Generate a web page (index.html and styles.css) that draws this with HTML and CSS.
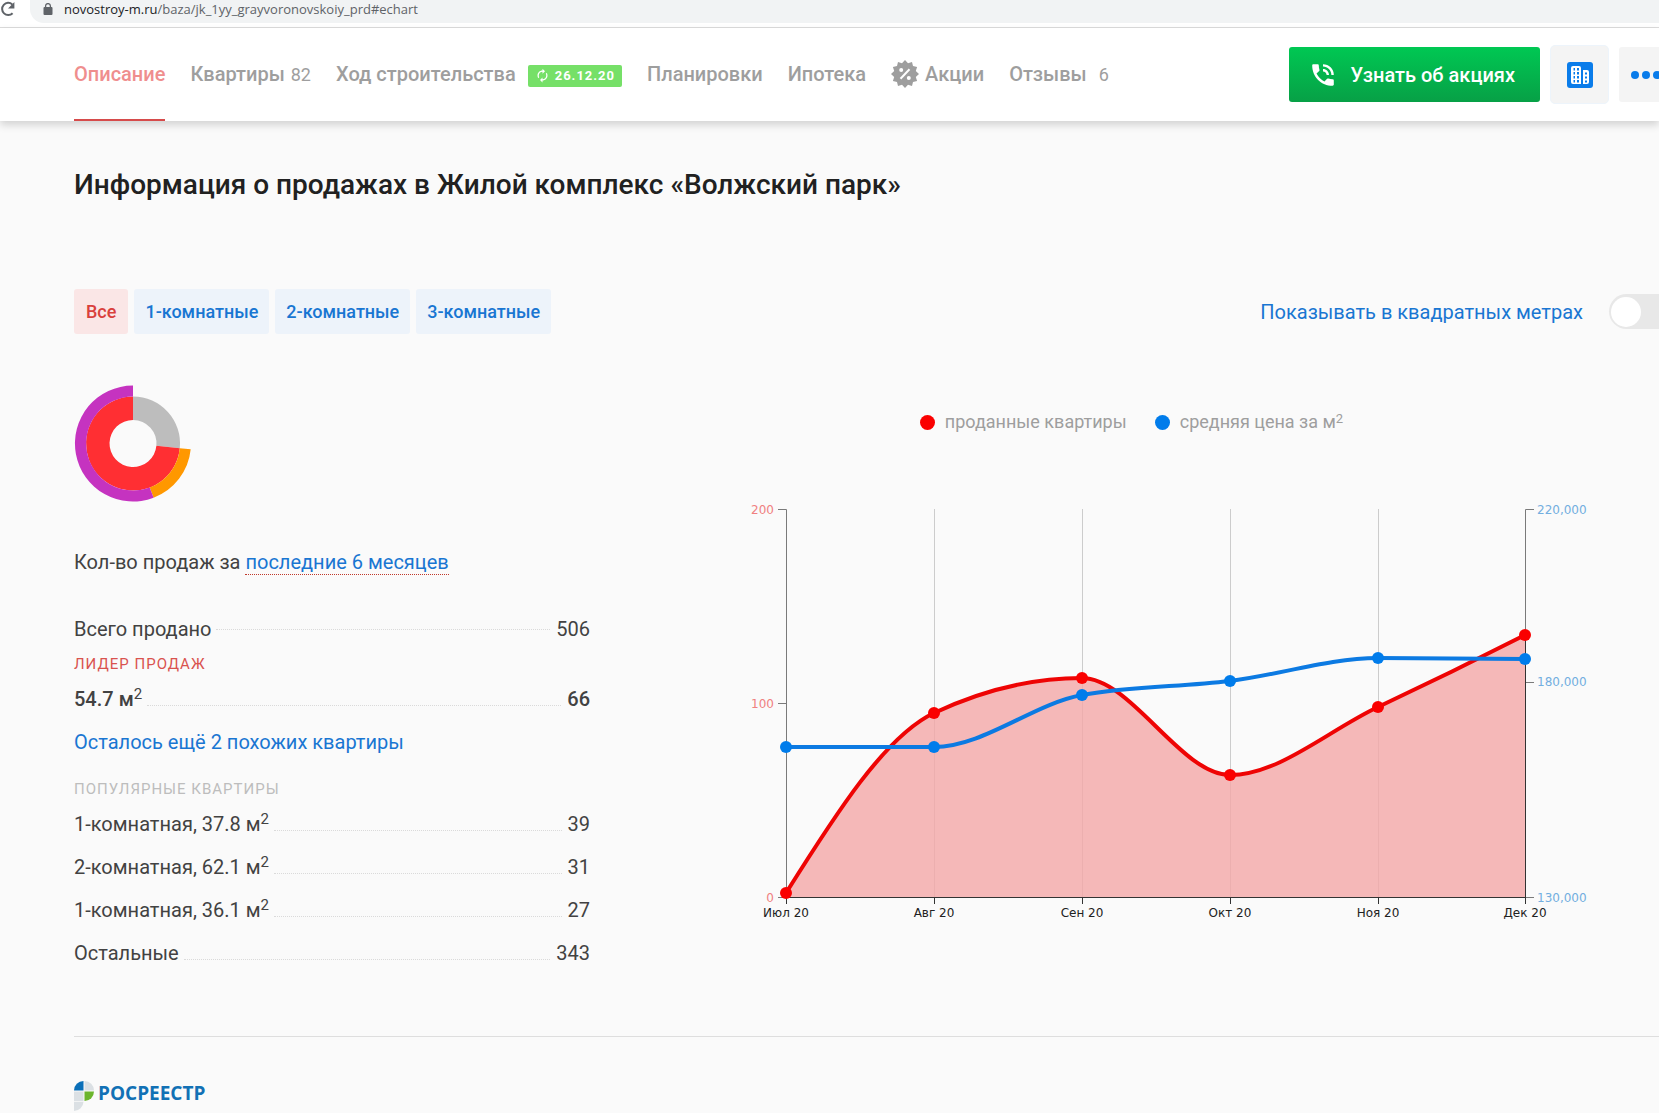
FILE: index.html
```html
<!DOCTYPE html>
<html lang="ru">
<head>
<meta charset="utf-8">
<title>Жилой комплекс «Волжский парк»</title>
<link rel="stylesheet" href="styles.css">
</head>
<body>
<div class="browser-bar">
  <svg class="reload" viewBox="0 0 16 16" width="16" height="16" aria-hidden="true"><path d="M12.6 12.2A6.1 6.1 0 1 1 12.3 3.4" fill="none" stroke="#5f6368" stroke-width="2"/><path d="M14.4 1v6.4H8z" fill="#5f6368"/></svg>
  <div class="address">
    <svg viewBox="0 0 10 12" width="10" height="12" aria-hidden="true"><rect x="0.5" y="4" width="9" height="8" rx="1" fill="#5f6368"/><path d="M2.6 5V3a2.4 2.4 0 0 1 4.8 0v2" fill="none" stroke="#5f6368" stroke-width="1.3"/></svg>
    <span><span class="host">novostroy-m.ru</span>/baza/jk_1yy_grayvoronovskoiy_prd#echart</span>
  </div>
</div>

<header class="header">
  <nav class="nav">
    <a class="nav-link active" href="#about">Описание</a>
    <a class="nav-link" href="#flats">Квартиры <span class="count">82</span></a>
    <a class="nav-link" href="#progress">Ход строительства
      <span class="badge"><svg viewBox="0 0 24 24" width="15" height="15" aria-hidden="true"><path fill="currentColor" d="M12 6v3l4-4-4-4v3c-4.42 0-8 3.58-8 8 0 1.57.46 3.03 1.24 4.26L6.7 14.8A5.87 5.87 0 0 1 6 12c0-3.31 2.69-6 6-6zm6.76 1.74L17.3 9.2c.44.84.7 1.79.7 2.8 0 3.31-2.69 6-6 6v-3l-4 4 4 4v-3c4.42 0 8-3.58 8-8 0-1.57-.46-3.03-1.24-4.26z"/></svg>26.12.20</span></a>
    <a class="nav-link" href="#plans">Планировки</a>
    <a class="nav-link" href="#mortgage">Ипотека</a>
    <a class="nav-link" href="#promo"><svg viewBox="0 0 28 28" width="28" height="28" aria-hidden="true"><path fill="currentColor" d="M14 0l3 3.2L21 1.900l1 4.100 4.100 1-1.300 4L28 14l-3.200 3 1.300 4-4.100 1-1 4.100-4-1.300L14 28l-3-3.200-4 1.300L6 22l-4.100-1 1.300-4L0 14l3.200-3L1.900 7 6 6l1-4.100 4 1.300z"/><path d="M9.500 18.800L18.500 9.200" stroke="#fff" stroke-width="2"/><circle cx="10.200" cy="10" r="2" fill="#fff"/><circle cx="17.800" cy="18" r="2" fill="#fff"/></svg>Акции</a>
    <a class="nav-link" href="#reviews">Отзывы <span class="count count-wide">6</span></a>
  </nav>
  <div class="actions">
    <button class="call" type="button"><svg viewBox="2 2 20 20" width="24" height="24" aria-hidden="true"><path fill="currentColor" d="M20 15.500c-1.250 0-2.450-.2-3.570-.57a1.020 1.020 0 0 0-1.020.24l-2.200 2.200a15.045 15.045 0 0 1-6.590-6.590l2.200-2.210c.28-.26.36-.65.25-1C8.700 6.450 8.500 5.250 8.500 4c0-.55-.45-1-1-1H4c-.55 0-1 .45-1 1 0 9.390 7.610 17 17 17 .55 0 1-.45 1-1v-3.500c0-.55-.45-1-1-1zM19 12h2a9 9 0 0 0-9-9v2c3.870 0 7 3.130 7 7zm-4 0h2c0-2.760-2.240-5-5-5v2c1.660 0 3 1.340 3 3z"/></svg>Узнать об акциях</button>
    <button class="compare" type="button" aria-label="Новостройки"><svg viewBox="0 0 26 26" width="26" height="26" aria-hidden="true"><rect width="26" height="26" rx="3" fill="#0a7cea"/><path fill="#fff" fill-rule="evenodd" d="M6 4h6q2 0 2 2v16H6q-2 0-2-2V6q0-2 2-2zm.5 2v2.500H8V6zm3.500 0v2.500h2V6zM6.500 10v2.500H8V10zm3.500 0v2.500h2V10zm-3.500 4v2.500H8V14zm3.500 0v2.500h2V14zm-3.500 4v2.500H8V18zm3.500 0v2.500h2V18z"/><path fill="#fff" fill-rule="evenodd" d="M16 8h4q2 0 2 2v10q0 2-2 2h-4zm2 2.500v2h2v-2zm0 4v2h2v-2zm0 4v2h2v-2z"/></svg></button>
    <button class="more" type="button" aria-label="Ещё"><svg viewBox="0 0 30 8" width="30" height="8" aria-hidden="true"><g fill="#0a7cea"><circle cx="4" cy="4" r="4"/><circle cx="15" cy="4" r="4"/><circle cx="26" cy="4" r="4"/></g></svg></button>
  </div>
</header>

<main class="main">
  <h1>Информация о продажах в Жилой комплекс «Волжский парк»</h1>

  <div class="toolbar">
    <div class="tabs">
      <button class="tab selected" type="button">Все</button>
      <button class="tab" type="button">1-комнатные</button>
      <button class="tab" type="button">2-комнатные</button>
      <button class="tab" type="button">3-комнатные</button>
    </div>
    <div class="switch">
      <label for="meters">Показывать в квадратных метрах</label>
      <input id="meters" type="checkbox">
    </div>
  </div>

  <div class="content">
    <section class="stats">
      <svg class="donut" viewBox="0 0 118 118" width="118" height="118" role="img" aria-label="Доли продаж">
        <path d="M59 12.500A47 47 0 0 1 105.800 64.200L82.400 61.800A23.500 23.500 0 0 0 59 36z" fill="#bdbdbd"/>
        <path d="M105.800 64.200A47 47 0 1 1 59 12.500V36A23.500 23.500 0 1 0 82.400 61.800z" fill="#ff2f33"/>
        <path d="M116.700 65.300A58 58 0 0 1 79.600 113.700L75.700 103.500A47 47 0 0 0 105.800 64.200z" fill="#ff9800"/>
        <path d="M79.600 113.700A58 58 0 1 1 59 1.500V12.500A47 47 0 1 0 75.700 103.500z" fill="#c533c0"/>
      </svg>
      <p class="period">Кол-во продаж за <a href="#period">последние 6 месяцев</a></p>
      <dl class="rows">
        <div class="row row-total"><dt><span>Всего продано</span></dt><dd>506</dd></div>
      </dl>
      <h2 class="caption leader">Лидер продаж</h2>
      <dl class="rows">
        <div class="row row-bold"><dt><span>54.7 м<sup>2</sup></span></dt><dd>66</dd></div>
      </dl>
      <a class="similar" href="#similar">Осталось ещё 2 похожих квартиры</a>
      <h2 class="caption popular">Популярные квартиры</h2>
      <dl class="rows">
        <div class="row"><dt><span>1-комнатная, 37.8 м<sup>2</sup></span></dt><dd>39</dd></div>
        <div class="row"><dt><span>2-комнатная, 62.1 м<sup>2</sup></span></dt><dd>31</dd></div>
        <div class="row"><dt><span>1-комнатная, 36.1 м<sup>2</sup></span></dt><dd>27</dd></div>
        <div class="row"><dt><span>Остальные</span></dt><dd>343</dd></div>
      </dl>
    </section>

    <section class="chart">
      <ul class="legend">
        <li class="sold">проданные квартиры</li>
        <li class="price"><span>средняя цена за м<sup>2</sup></span></li>
      </ul>
      <svg class="plot" viewBox="0 0 860 430" role="img" aria-label="Продажи и цены по месяцам">
        <path class="grid" d="M194.500 9V397M342.500 9V397M490.500 9V397M638.500 9V397"/>
        <path class="axis" d="M38 9.500H46.500V397M38 203.500H46M38 397.500H46M794 9.500H785.500V397M786 182.500H794M786 397.500H794"/>
        <path class="area" d="M46 393C95 315 145 236 194 213C243 190 293 178 342 178C391 178 441 275 490 275C539 275 589 230 638 207C687 184 736 160 785 135V397H46z"/>
        <path class="axis-x" d="M46 397.500H786M46.500 397V404M194.500 397V404M342.500 397V404M490.500 397V404M638.500 397V404M785.500 135V404"/>
        <path class="line line-red" d="M46 393C95 315 145 236 194 213C243 190 293 178 342 178C391 178 441 275 490 275C539 275 589 230 638 207C687 184 736 160 785 135"/>
        <g class="dots-red"><circle cx="46" cy="393" r="6"/><circle cx="194" cy="213" r="6"/><circle cx="342" cy="178" r="6"/><circle cx="490" cy="275" r="6"/><circle cx="638" cy="207" r="6"/><circle cx="785" cy="135" r="6"/></g>
        <path class="line line-blue" d="M46 247C95 247 145 247 194 247C243 247 293 204 342 195C391 186 441 187 490 181C539 175 589 158 638 158C687 158 736 159 785 159"/>
        <g class="dots-blue"><circle cx="46" cy="247" r="6"/><circle cx="194" cy="247" r="6"/><circle cx="342" cy="195" r="6"/><circle cx="490" cy="181" r="6"/><circle cx="638" cy="158" r="6"/><circle cx="785" cy="159" r="6"/></g>
        <g class="tick tick-left"><text x="34" y="14">200</text><text x="34" y="208">100</text><text x="34" y="402">0</text></g>
        <g class="tick tick-right"><text x="797" y="14">220,000</text><text x="797" y="186">180,000</text><text x="797" y="402">130,000</text></g>
        <g class="tick tick-month"><text x="46" y="417">Июл 20</text><text x="194" y="417">Авг 20</text><text x="342" y="417">Сен 20</text><text x="490" y="417">Окт 20</text><text x="638" y="417">Ноя 20</text><text x="785" y="417">Дек 20</text></g>
      </svg>
    </section>
  </div>

  <footer class="source">
    <svg viewBox="0 0 20 30" width="20" height="30" aria-hidden="true"><path d="M0 9.500A9.500 9.500 0 0 1 9.500 0V9.500z" fill="#0a6fb8"/><path d="M10.500 0A9.500 9.500 0 0 1 20 9.500H10.500zM0 10.500H9.500V20H0zM0 20.800H9.500A9.500 9.500 0 0 1 0 30z" fill="#dbe0e4"/><path d="M10.500 10.500H20A9.500 9.500 0 0 1 10.500 20z" fill="#6cb52d"/></svg>
    <span>РОСРЕЕСТР</span>
  </footer>
</main>
</body>
</html>
```
FILE: styles.css
```css
* {
  box-sizing: border-box;
}

body {
  margin: 0;
  overflow-x: hidden;
  background: #fafafa;
  color: #424242;
  font-family: Roboto, "Liberation Sans", sans-serif;
  font-size: 20px;
  line-height: 28px;
}

a {
  color: #1976d2;
  text-decoration: none;
}

button {
  border: 0;
  font-family: inherit;
  cursor: pointer;
}

sup {
  font-size: 15px;
  line-height: 0;
  vertical-align: 7px;
}

/* Address bar */
.browser-bar {
  display: flex;
  gap: 14px;
  height: 28px;
  padding-bottom: 4px;
  border-bottom: 1px solid #dcdcdc;
  background: #fff;
}

.reload {
  margin-top: 1px;
}

.address {
  flex: 1;
  display: flex;
  align-items: center;
  gap: 11px;
  padding: 0 13px 5px;
  border-radius: 0 0 0 14px;
  background: #f1f3f4;
  color: #5f6368;
  font-family: "Open Sans", "Noto Sans", sans-serif;
  font-size: 13px;
  line-height: 18px;
}

.host {
  color: #202124;
}

/* Sticky header */
.header {
  display: flex;
  justify-content: space-between;
  height: 93px;
  padding-left: 74px;
  background: #fff;
  box-shadow: 0 4px 8px rgba(0, 0, 0, 0.16);
}

.nav {
  display: flex;
  gap: 25px;
}

.nav-link {
  display: flex;
  align-items: center;
  gap: 6px;
  border-bottom: 2px solid transparent;
  color: #9e9e9e;
  font-weight: 500;
  white-space: nowrap;
}

.nav-link.active {
  border-color: #d64b4b;
  color: #ef8e8e;
}

.count {
  padding-top: 2px;
  font-size: 18px;
  font-weight: 400;
}

.count-wide {
  padding-left: 6px;
}

.badge {
  display: flex;
  align-items: center;
  gap: 5px;
  height: 22px;
  margin: 4px 0 0 6px;
  padding: 0 7px;
  border-radius: 2px;
  background: #76e068;
  color: #fff;
  font-size: 13px;
  font-weight: 700;
  letter-spacing: 1px;
}

.actions {
  display: flex;
  align-items: center;
  gap: 10px;
}

.call {
  display: flex;
  align-items: center;
  gap: 16px;
  height: 55px;
  padding: 0 25px 0 22px;
  border-radius: 3px;
  background: linear-gradient(#00c853, #07a046);
  color: #fff;
  font-size: 20px;
  font-weight: 500;
  white-space: nowrap;
}

.compare {
  display: flex;
  align-items: center;
  justify-content: center;
  width: 59px;
  height: 59px;
  padding: 0;
  border: 1px solid #edf4fb;
  border-radius: 5px;
  background: #f4f4f4;
}

.more {
  display: flex;
  align-items: center;
  overflow: hidden;
  width: 40px;
  height: 55px;
  padding: 0 0 0 12px;
  border-radius: 3px 0 0 3px;
  background: #f4f4f4;
}

.more svg {
  flex: none;
}

/* Sales section */
.main {
  padding: 46px 0 0 74px;
}

h1 {
  margin: 0 0 86px;
  color: #212121;
  font-size: 28px;
  font-weight: 500;
  line-height: 36px;
}

.toolbar {
  display: flex;
  align-items: center;
  justify-content: space-between;
}

.tabs {
  display: flex;
  gap: 6px;
}

.tab {
  height: 45px;
  padding: 0 11px;
  border-radius: 3px;
  background: #edf3fa;
  color: #1976d2;
  font-size: 18px;
  font-weight: 500;
}

.tab.selected {
  padding: 0 12px;
  background: #fae6e6;
  color: #d9403c;
}

.switch {
  display: flex;
  align-items: center;
  gap: 26px;
  color: #1976d2;
}

.switch input {
  appearance: none;
  display: flex;
  align-items: center;
  width: 50px;
  height: 35px;
  margin: 0;
  padding: 0 2px;
  border-radius: 18px 0 0 18px;
  background: #e8e8e8;
}

.switch input::before {
  content: "";
  width: 30px;
  height: 30px;
  border-radius: 50%;
  background: #fff;
}

.switch input:checked {
  justify-content: flex-end;
}

.content {
  display: grid;
  grid-template-columns: 516px 1fr;
  gap: 150px;
  padding: 50px 0 69px;
  border-bottom: 1px solid #dedede;
}

.donut {
  display: block;
}

.period {
  margin: 46px 0 39px;
}

.period a {
  border-bottom: 1px dotted #c0392b;
}

.rows {
  display: grid;
  gap: 15px;
  margin: 0;
}

.row {
  display: flex;
  gap: 6px;
}

.row dt {
  flex: 1;
  display: flex;
  align-items: baseline;
  gap: 5px;
}

.row dt::after {
  content: "";
  flex: 1;
  border-bottom: 1px dotted #dadada;
}

.row-total dt::after {
  align-self: center;
}

.row-bold {
  font-weight: 500;
}

.row-bold sup {
  font-weight: 400;
}

.row dd {
  margin: 0;
}

.caption {
  margin: 11px 0;
  font-size: 15px;
  font-weight: 400;
  line-height: 20px;
  letter-spacing: 1px;
  text-transform: uppercase;
}

.leader {
  color: #d9534f;
}

.popular {
  margin-top: 23px;
  color: #bdbdbd;
}

.similar {
  display: block;
  margin-top: 15px;
}

/* Chart */
.chart {
  padding: 26px 59px 0 0;
}

.legend {
  display: flex;
  justify-content: center;
  gap: 28px;
  margin: 0 0 66px;
  padding: 0 77px 0 0;
  color: #9e9e9e;
  font-size: 18px;
  line-height: 24px;
  list-style: none;
}

.legend li {
  display: flex;
  align-items: center;
  gap: 10px;
}

.legend li::before {
  content: "";
  width: 15px;
  height: 15px;
  border-radius: 50%;
}

.legend sup {
  font-size: 13px;
  vertical-align: 5px;
}

.sold::before {
  background: #fa0000;
}

.price::before {
  background: #007ceb;
}

.plot {
  display: block;
  width: 100%;
}

.plot path {
  fill: none;
}

.plot .grid {
  stroke: #cccccc;
}

.plot .axis {
  stroke: #7a7a7a;
}

.plot .axis-x {
  stroke: #333;
}

.plot .area {
  fill: rgba(244, 167, 167, 0.8);
}

.plot .line {
  stroke-width: 4;
}

.plot .line-red {
  stroke: #ee0404;
}

.plot .line-blue {
  stroke: #0c7ae2;
}

.dots-red {
  fill: #fa0000;
}

.dots-blue {
  fill: #007ceb;
}

.tick {
  font-family: "DejaVu Sans", sans-serif;
  font-size: 12px;
}

.tick-left {
  fill: #f08080;
  text-anchor: end;
}

.tick-right {
  fill: #72aee0;
}

.tick-month {
  fill: #212121;
  text-anchor: middle;
}

/* Data source */
.source {
  display: flex;
  gap: 4px;
  padding: 44px 0 2px;
  color: #1271b5;
  font-family: "Open Sans", "Noto Sans", sans-serif;
  font-size: 19px;
  font-weight: 700;
  line-height: 24px;
}
```
